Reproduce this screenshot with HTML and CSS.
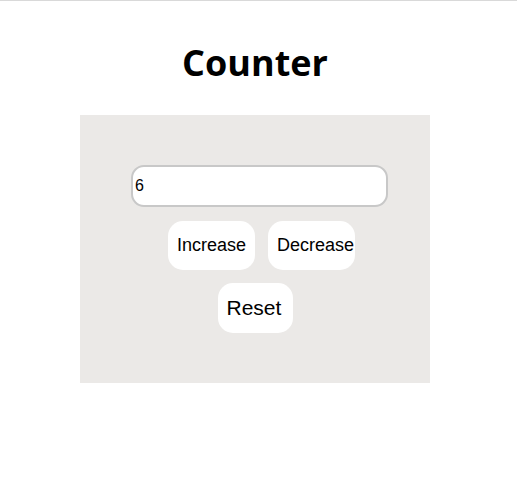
FILE: index.html
```html
<!DOCTYPE html>
<html>
<head>
<meta charset="utf-8">
<link rel="stylesheet" href="styles.css">
</head>
<body>
<div class="page">
  <h1 class="title">Counter</h1>
  <div class="panel">
    <input class="count" type="text" value="6">
    <div class="row">
      <button class="btn">Increase</button>
      <button class="btn">Decrease</button>
    </div>
    <button class="btn reset">Reset</button>
  </div>
</div>
</body>
</html>
```
FILE: styles.css
```css
html, body {
  margin: 0;
  padding: 0;
  background: #ffffff;
}
body {
  border-top: 1px solid #d9d9d9;
  font-family: "Liberation Sans", Arial, sans-serif;
}
.page {
  width: 510px;
  display: flex;
  flex-direction: column;
  align-items: center;
}
.title {
  font-family: "Open Sans", "Noto Sans", sans-serif;
  font-weight: 700;
  font-size: 36px;
  line-height: 48px;
  margin: 38px 0 28px 0;
  color: #000;
}
.panel {
  width: 350px;
  height: 268px;
  box-sizing: border-box;
  padding: 50px 0;
  background: #ebe9e7;
  display: flex;
  flex-direction: column;
  align-items: center;
}
.count {
  box-sizing: border-box;
  width: 257px;
  height: 42px;
  margin: 0 0 0 9px;
  padding: 0 2px;
  border: 2px solid #c8c8c8;
  border-radius: 13px;
  background: #fff;
  font-family: "Liberation Sans", Arial, sans-serif;
  font-size: 16px;
  color: #000;
  outline: none;
}
.row {
  display: flex;
  margin-top: 14px;
}
.btn {
  box-sizing: border-box;
  width: 87px;
  height: 49px;
  margin-left: 13px;
  padding: 0 9px;
  border: none;
  border-radius: 15px;
  background: #fff;
  font-family: "Liberation Sans", Arial, sans-serif;
  font-size: 18px;
  color: #000;
  white-space: nowrap;
  text-align: left;
}
.reset {
  width: 75px;
  height: 50px;
  margin: 13px 0 0 0;
  font-size: 21px;
}
```
